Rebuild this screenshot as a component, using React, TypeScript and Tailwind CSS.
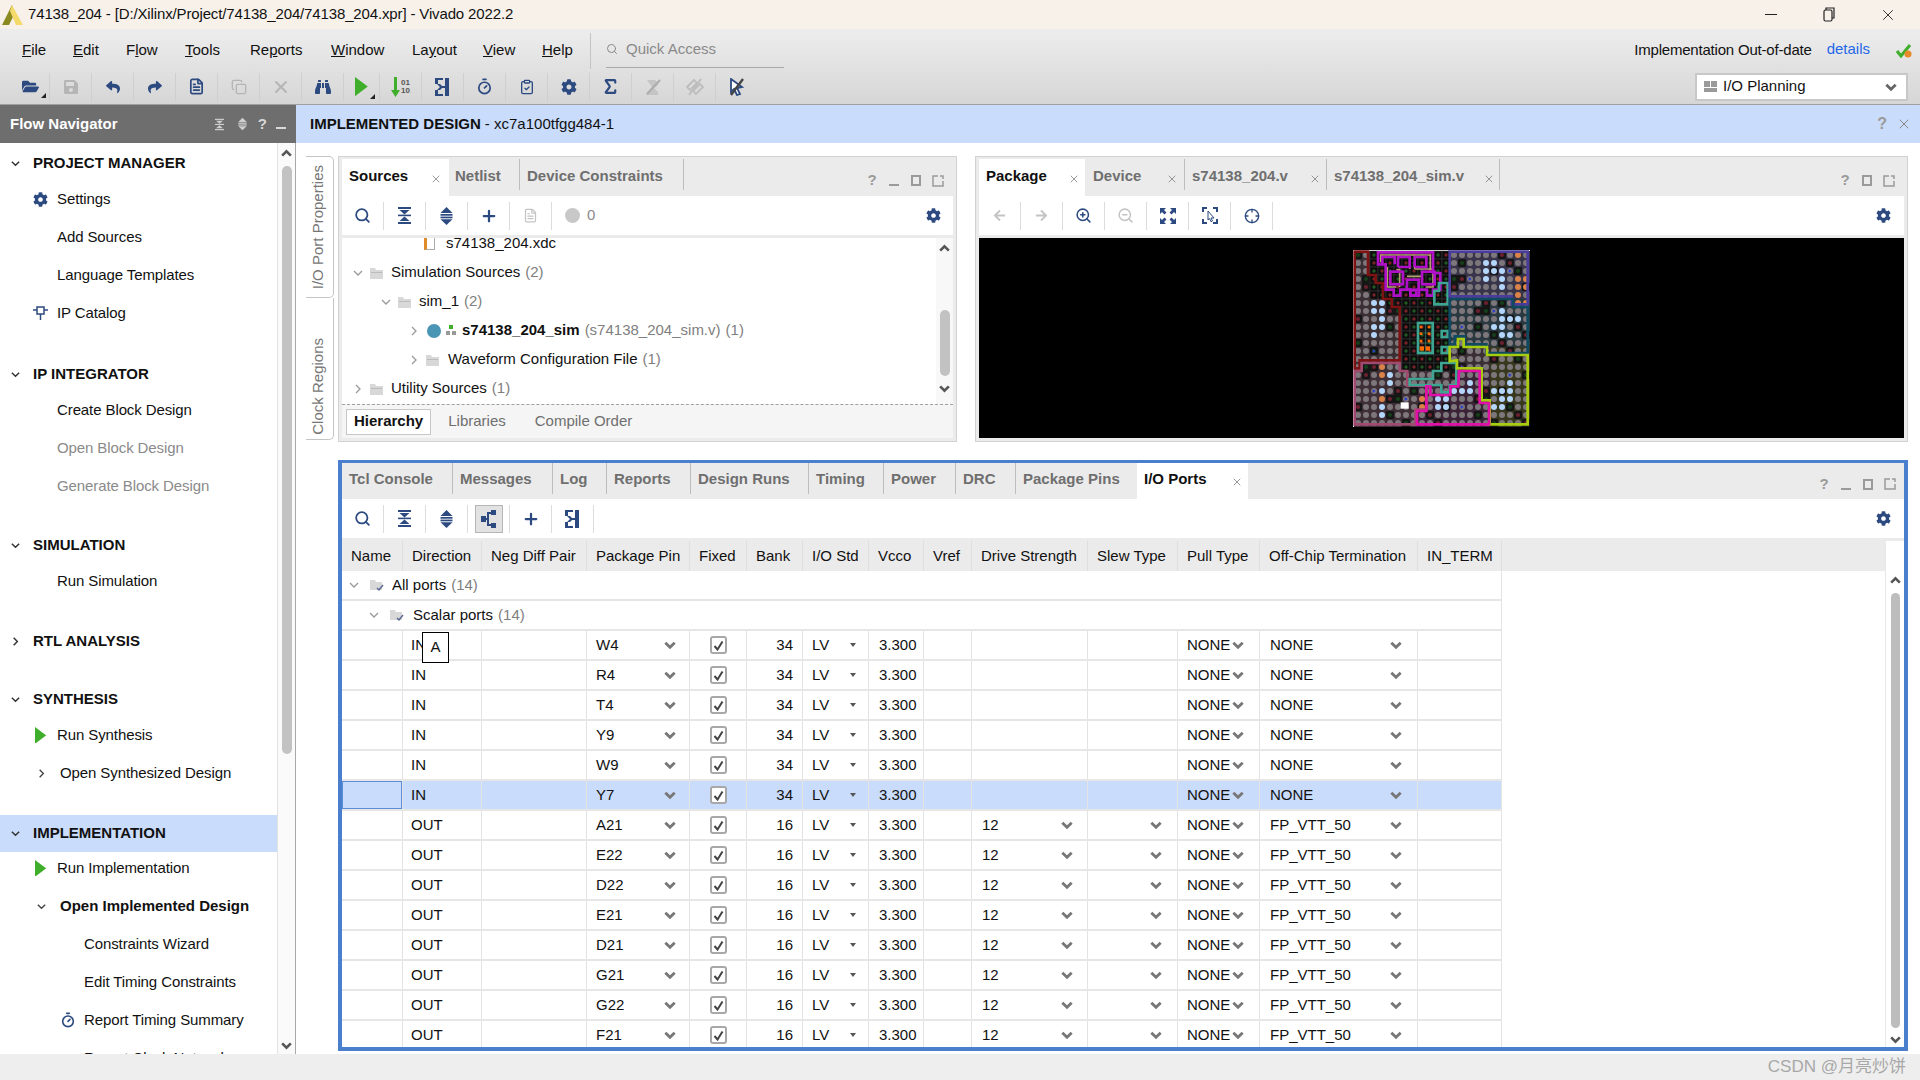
import { ReactNode } from "react";
import { Copy, Crosshair, FileText, Plus, Search, Sigma, Timer, ZoomIn, ZoomOut, ClipboardCheck, X } from "lucide-react";
import { FaArrowLeft, FaArrowRight, FaBinoculars, FaCog, FaFolderOpen, FaReply, FaSave, FaShare } from "react-icons/fa";

const NAVY = "#2c4a80";

const Chevron = ({ dir = "down", color = "#777", size = 14, w = 2.4 }: { dir?: "down" | "up" | "right"; color?: string; size?: number; w?: number }) => {
    const d = dir === "down" ? "M2 4l4 4 4-4" : dir === "up" ? "M2 8l4-4 4 4" : "M4 2l4 4-4 4";
    return (
        <svg width={size} height={size} viewBox="0 0 12 12" fill="none" stroke={color} strokeWidth={w}>
            <path d={d} />
        </svg>
    );
};

const Play = ({ size = 16 }: { size?: number }) => (
    <svg width={size * 0.8} height={size * 1.2} viewBox="0 0 12 18">
        <path d="M0 0l12 9-12 9z" fill="#3fae2a" />
    </svg>
);

const CollapseIcon = ({ color = NAVY }: { color?: string }) => (
    <svg width="15" height="17" viewBox="0 0 15 17" fill={color}>
        <rect x="1" y="0" width="13" height="2" />
        <path d="M2.5 3h10l-5 4.5z" />
        <rect x="1" y="7.6" width="13" height="1.6" />
        <path d="M7.5 9.6l5 4.4h-10z" />
        <rect x="1" y="15" width="13" height="2" />
    </svg>
);

const ExpandIcon = ({ color = NAVY }: { color?: string }) => (
    <svg width="13" height="18" viewBox="0 0 13 18" fill={color}>
        <path d="M6.5 0l6 6h-12z" />
        <rect x="0.5" y="7" width="12" height="1.7" />
        <rect x="0.5" y="9.6" width="12" height="1.7" />
        <path d="M0.5 12.2h12l-6 5.8z" />
    </svg>
);

const RouteIcon = ({ color = NAVY }: { color?: string }) => (
    <svg width="16" height="18" viewBox="0 0 16 18" fill={color}>
        <path d="M0 0h8v2H3v4h2L8 9l-3 3H3v4h5v2H0v-6h2l3-3-3-3H0z" />
        <rect x="10" y="0" width="4" height="18" />
        <path d="M6 8h4v2H6z" />
    </svg>
);

const HierIcon = () => (
    <svg width="16" height="18" viewBox="0 0 16 18" fill={NAVY}>
        <rect x="0" y="6" width="5" height="6" />
        <rect x="10" y="0" width="5" height="5" />
        <rect x="10" y="13" width="5" height="5" />
        <rect x="6" y="2" width="2" height="14" />
        <rect x="4" y="8" width="4" height="2" />
        <rect x="7" y="2" width="4" height="2" />
        <rect x="7" y="14" width="4" height="2" />
    </svg>
);

const FitIcon = () => (
    <svg width="16" height="16" viewBox="0 0 16 16" fill={NAVY}>
        <path d="M0 0h6L4 2l2.5 2.5-2 2L2 4 0 6zM16 0v6l-2-2-2.500 2.500-2-2L12 2l-2-2zM0 16v-6l2 2 2.500-2.500 2 2L4 14l2 2zM16 16h-6l2-2-2.500-2.500 2-2L14 12l2-2z" />
    </svg>
);

const SelectIcon = () => (
    <svg width="16" height="17" viewBox="0 0 16 17" fill="none" stroke={NAVY} strokeWidth="1.500">
        <path d="M1 5V1h4M11 1h4v4M1 12v4h4M11 16h4v-4" strokeWidth="2" />
        <path d="M6 4l6 7H9l1.500 3-1.500.7L7.500 11.500 6 13z" strokeWidth="1" />
    </svg>
);

const BitIcon = () => (
    <span className="flex items-center gap-[1px]">
        <svg width="9" height="20" viewBox="0 0 9 20"><path d="M3 0h3v13h3l-4.500 7L0 13h3z" fill="#3fae2a" /></svg>
        <span className="flex flex-col text-[8px] leading-[8px] font-bold text-[#555]"><span>01</span><span>10</span></span>
    </span>
);

const SigmaOff = () => (
    <svg width="18" height="18" viewBox="0 0 18 18">
        <path d="M2 17L8 9 3 2h8l3 3v2L10 10l4 4v3z" fill="#c4c4c4" />
        <path d="M3 16L16 2" stroke="#adadad" strokeWidth="2" />
    </svg>
);

const DiamondOff = () => (
    <svg width="18" height="18" viewBox="0 0 18 18" fill="none" stroke="#bdbdbd" strokeWidth="1.800">
        <path d="M1 9l7-7 3 3-7 7zM7 13l7-7 3 3-7 7z" />
        <path d="M3 17L15 1" strokeWidth="2" />
    </svg>
);

const CursorOff = () => (
    <svg width="18" height="18" viewBox="0 0 18 18">
        <path d="M3 1l11 8-5 1 3 6-3 1-3-6-3 3z" fill="#fff" stroke={NAVY} strokeWidth="1.800" />
        <path d="M3 17L15 1" stroke="#444" strokeWidth="2.400" />
    </svg>
);

const DropMark = () => <span className="absolute -right-[7px] -bottom-[3px] w-0 h-0 border-l-[5px] border-t-[5px] border-l-transparent border-t-transparent border-b-0 border-r-[5px] border-r-[#222]" />;

const WinRestore = () => (
    <svg width="12" height="15" viewBox="0 0 12 15" fill="none" stroke="#222" strokeWidth="1.200">
        <rect x="1" y="3" width="8" height="11" rx="1.500" />
        <path d="M3 3V1h8v10H9" />
    </svg>
);

const PanelControls = ({ min = true }: { min?: boolean }) => (
    <div className="flex items-center text-[#9a9a9a]">
        <span className="w-[22px] text-center text-[15px] font-bold">?</span>
        {min && <span className="w-[22px] flex justify-center pt-[9px]"><span className="w-[10px] h-[2px] bg-[#9a9a9a]" /></span>}
        <span className="w-[22px] flex justify-center"><span className="w-[10px] h-[11px] border-2 border-[#9a9a9a]" /></span>
        <span className="w-[22px] flex justify-center">
            <svg width="12" height="12" viewBox="0 0 12 12" fill="none" stroke="#9a9a9a" strokeWidth="1.500">
                <path d="M6 1H1v10h10V6M8 1h3v3" />
            </svg>
        </span>
    </div>
);

const Tab = ({ label, width, active, close, closeGap }: { label: string; width: string; active?: boolean; close?: boolean; closeGap?: string }) => (
    <div className={`${width} h-full flex items-center pl-[7px] shrink-0 ${active ? "bg-white text-[#111]" : "text-[#6f6f6f]"}`}>
        <span className="text-[15px] font-bold whitespace-nowrap mb-[3px]">{label}</span>
        {close && (
            <span className={`ml-auto ${closeGap ?? "mr-[6px]"} mt-[2px]`}>
                <X size={12} color="#777" strokeWidth={1.500} />
            </span>
        )}
    </div>
);

const TabSep = () => <span className="w-[1px] h-[31px] bg-[#bdbdbd] shrink-0 -mt-[6px]" />;

const Slot = ({ children, on }: { children?: ReactNode; on?: boolean }) => (
    <div className="w-[42px] h-[28px] flex items-center justify-center border-r border-[#dcdcdc] shrink-0">
        {on ? (
            <span className="w-[28px] h-[28px] flex items-center justify-center bg-[#e2e2e2] border border-[#b5b5b5]">{children}</span>
        ) : (
            children
        )}
    </div>
);

const Gear = ({ size = 15 }: { size?: number }) => <FaCog size={size} color={NAVY} />;

const NavHeader = ({ label, open, active, mt }: { label: string; open?: boolean; active?: boolean; mt?: string }) => (
    <div className={`h-[37px] flex items-center pl-[10px] ${mt ?? ""} ${active ? "bg-[#c9dcfb]" : ""}`}>
        <span className="w-[23px] flex"><Chevron dir={open ? "down" : "right"} color="#333" size={11} w={1.600} /></span>
        <span className="text-[15px] font-bold text-[#111] whitespace-nowrap">{label}</span>
    </div>
);

const NavItem = ({ label, icon, pad = "pl-[33px]", muted, bold }: { label: string; icon?: ReactNode; pad?: string; muted?: boolean; bold?: boolean }) => (
    <div className={`h-[38px] flex items-center ${pad}`}>
        <span className="w-[24px] flex justify-start">{icon}</span>
        <span className={`text-[15px] tracking-[-0.1px] whitespace-nowrap ${muted ? "text-[#8a8a8a]" : "text-[#111]"} ${bold ? "font-bold" : ""}`}>{label}</span>
    </div>
);

const Sidebar = () => (
    <div className="w-[296px] shrink-0 flex border-r border-[#a8a8a8] overflow-hidden">
        <div className="w-[277px] shrink-0 overflow-hidden pt-[2px]">
            <NavHeader label="PROJECT MANAGER" open />
            <div className="-mt-[2px]">
                <NavItem label="Settings" icon={<Gear size={15} />} />
                <NavItem label="Add Sources" />
                <NavItem label="Language Templates" />
                <NavItem label="IP Catalog" icon={
                    <svg width="15" height="16" viewBox="0 0 15 16" fill="none" stroke={NAVY} strokeWidth="1.500"><rect x="4" y="2" width="7" height="7" /><path d="M7.500 9v6M0 5h4M11 5h4" /></svg>
                } />
            </div>
            <NavHeader label="IP INTEGRATOR" open mt="mt-[24px]" />
            <div className="-mt-[2px]">
                <NavItem label="Create Block Design" />
                <NavItem label="Open Block Design" muted />
                <NavItem label="Generate Block Design" muted />
            </div>
            <NavHeader label="SIMULATION" open mt="mt-[22px]" />
            <div className="-mt-[2px]">
                <NavItem label="Run Simulation" />
            </div>
            <NavHeader label="RTL ANALYSIS" mt="mt-[23px]" />
            <NavHeader label="SYNTHESIS" open mt="mt-[21px]" />
            <div className="-mt-[2px]">
                <NavItem label="Run Synthesis" icon={<span className="ml-[2px]"><Play size={14} /></span>} />
                <div className="h-[38px] flex items-center pl-[36px]">
                    <span className="w-[24px]"><Chevron dir="right" color="#444" size={11} w={1.500} /></span>
                    <span className="text-[15px] tracking-[-0.1px] text-[#111] whitespace-nowrap">Open Synthesized Design</span>
                </div>
            </div>
            <NavHeader label="IMPLEMENTATION" open active mt="mt-[23px]" />
            <div className="-mt-[3px]">
                <NavItem label="Run Implementation" icon={<span className="ml-[2px]"><Play size={14} /></span>} />
                <div className="h-[38px] flex items-center pl-[36px]">
                    <span className="w-[24px]"><Chevron color="#444" size={11} w={1.500} /></span>
                    <span className="text-[15px] font-bold text-[#111] whitespace-nowrap">Open Implemented Design</span>
                </div>
                <NavItem label="Constraints Wizard" pad="pl-[60px]" />
                <NavItem label="Edit Timing Constraints" pad="pl-[60px]" />
                <NavItem label="Report Timing Summary" pad="pl-[60px]" icon={<Timer size={16} color={NAVY} strokeWidth={2.400} />} />
                <NavItem label="Report Clock Networks" pad="pl-[60px]" />
            </div>
        </div>
        <div className="w-[18px] shrink-0 border-l border-[#e2e2e2] bg-[#fafafa] flex flex-col items-center pt-[4px]">
            <Chevron dir="up" size={13} color="#555" />
            <span className="w-[10px] h-[588px] mt-[6px] rounded-[5px] bg-[#c2c2c2]" />
            <span className="mt-[285px]"><Chevron size={13} color="#555" /></span>
        </div>
    </div>
);

const FolderIcon = () => (
    <svg width="13" height="12" viewBox="0 0 13 12">
        <path d="M0 1h5l1 2h7v9H0z" fill="#d8d8d8" />
        <path d="M1 5h11v1H1z" fill="#bcbcbc" />
    </svg>
);

const TreeRow = ({ pad, arrow, children }: { pad: string; arrow?: "down" | "right"; children: ReactNode }) => (
    <div className={`h-[29px] flex items-center shrink-0 whitespace-nowrap text-[15px] text-[#111] ${pad}`}>
        <span className="w-[18px] flex">{arrow && <Chevron dir={arrow} color="#999" size={12} w={1.300} />}</span>
        {children}
    </div>
);

const Count = ({ children }: { children: ReactNode }) => <span className="text-[#808080] ml-[5px]">{children}</span>;

const SourcesPanel = () => (
    <div className="w-[619px] h-full shrink-0 flex flex-col bg-[#ebebeb] border border-[#d2d2d2] px-[3px] pb-[3px]">
        <div className="h-[38px] shrink-0 flex items-end mt-[1px]">
            <div className="h-[37px] flex items-center w-full">
                <Tab label="Sources" width="w-[107px]" active close closeGap="mr-[7px]" />
                <Tab label="Netlist" width="w-[71px] ml-[-1px]" />
                <TabSep />
                <Tab label="Device Constraints" width="w-[163px]" />
                <TabSep />
                <div className="ml-auto mr-[4px] mt-[6px]"><PanelControls /></div>
            </div>
        </div>
        <div className="h-[39px] shrink-0 bg-white flex items-center pr-[5px]">
            <Slot><Search size={17} color={NAVY} strokeWidth={2.500} /></Slot>
            <Slot><CollapseIcon /></Slot>
            <Slot><ExpandIcon /></Slot>
            <Slot><Plus size={18} color={NAVY} strokeWidth={3} /></Slot>
            <Slot><FileText size={15} color="#c4c4c4" /></Slot>
            <div className="flex items-center ml-[13px] gap-[7px]">
                <span className="w-[15px] h-[15px] rounded-full bg-[#c8c8c8]" />
                <span className="text-[15px] text-[#8a8a8a]">0</span>
            </div>
            <span className="ml-auto mr-[7px]"><Gear size={15} /></span>
        </div>
        <div className="h-[3px] shrink-0" />
        <div className="h-[166px] shrink-0 bg-white flex overflow-hidden">
            <div className="flex-1 min-w-0 flex flex-col -mt-[9px]">
                <TreeRow pad="pl-[66px]">
                    <span className="w-[11px] h-[13px] bg-white border border-[#aaa] border-l-[3px] border-l-[#e08a2c] mr-[11px] ml-[-2px]" />
                    <span>s74138_204.xdc</span>
                </TreeRow>
                <TreeRow pad="pl-[10px]" arrow="down"><FolderIcon /><span className="ml-[8px]">Simulation Sources</span><Count>(2)</Count></TreeRow>
                <TreeRow pad="pl-[38px]" arrow="down"><FolderIcon /><span className="ml-[8px]">sim_1</span><Count>(2)</Count></TreeRow>
                <TreeRow pad="pl-[66px]" arrow="right">
                    <span className="w-[14px] h-[14px] rounded-full bg-[#4a95b4] ml-[1px]" />
                    <span className="w-[11px] h-[11px] flex flex-col items-center mx-[4px]">
                        <span className="w-[4px] h-[4px] bg-[#3fae2a]" />
                        <span className="flex gap-[2px] mt-[2px]"><span className="w-[4px] h-[4px] bg-[#999]" /><span className="w-[4px] h-[4px] bg-[#999]" /></span>
                    </span>
                    <span className="font-bold ml-[2px]">s74138_204_sim</span>
                    <Count>(s74138_204_sim.v)</Count>
                    <Count>(1)</Count>
                </TreeRow>
                <TreeRow pad="pl-[66px]" arrow="right"><FolderIcon /><span className="ml-[9px]">Waveform Configuration File</span><Count>(1)</Count></TreeRow>
                <TreeRow pad="pl-[10px]" arrow="right"><FolderIcon /><span className="ml-[8px]">Utility Sources</span><Count>(1)</Count></TreeRow>
            </div>
            <div className="w-[17px] shrink-0 bg-[#f8f8f8] flex flex-col items-center pt-[4px]">
                <Chevron dir="up" size={13} color="#555" />
                <span className="w-[10px] h-[66px] mt-[55px] rounded-[5px] bg-[#c2c2c2]" />
                <span className="mt-[6px]"><Chevron size={13} color="#555" /></span>
            </div>
        </div>
        <div className="flex-1 bg-[#f5f5f5] border-t border-dashed border-[#a0a0a0] flex items-center pl-[4px] text-[15px]">
            <span className="h-[26px] px-[7px] flex items-center bg-white border border-[#c8c8c8] font-bold text-[#111]">Hierarchy</span>
            <span className="ml-[17px] text-[#6f6f6f]">Libraries</span>
            <span className="ml-[29px] text-[#6f6f6f]">Compile Order</span>
        </div>
    </div>
);

const BLUE_CELLS = [[218,216],[243,216],[218,240],[243,240],[243,264],[218,288],[243,288],[218,312],[555,96],[579,96],[555,120],[579,120],[603,120],[555,144],[603,144],[603,168],[603,240],[603,264],[627,264],[651,264],[579,288],[603,288],[603,312],[627,312],[267,432],[267,456],[243,480],[243,528],[243,552],[507,456],[459,480],[483,480],[507,480],[411,504],[435,504],[411,528],[435,528],[579,480],[603,480],[627,456],[627,480],[603,504],[627,504],[579,528],[603,528]];
const ORANGE_CELLS = [[651,72],[651,144],[675,144],[651,168],[675,168],[651,192],[651,216],[675,216],[243,408],[243,432],[243,504],[363,504],[363,528]];
const ARROW_CELLS = [[507,144],[627,120],[579,240],[483,288],[219,168],[219,360],[219,480],[315,504],[483,408],[483,528],[627,432]];

const key = (x: number, y: number) => `${Math.floor((x - 163) / 24)}_${Math.floor((y - 64) / 24)}`;
const blueSet = new Set(BLUE_CELLS.map(([x, y]) => key(x, y)));
const orangeSet = new Set(ORANGE_CELLS.map(([x, y]) => key(x, y)));
const arrowSet = new Set(ARROW_CELLS.map(([x, y]) => key(x, y)));

const inCenter = (x: number, y: number) =>
    (x >= 300 && x < 450 && y < 418) || (x >= 205 && x < 300 && y < 205) || (x >= 250 && x < 300 && y < 230);

const tintAt = (x: number, y: number) => {
    if (x >= 450 && y < 205) return "#38344a";
    if (x >= 450 && y < 350) return "#2a383f";
    if (x >= 570 && y >= 350) return "#38381f";
    if (x >= 350 && y >= 470) return "#3c2438";
    if (x >= 450 && y >= 420) return "#3c2438";
    if (y >= 410) return "#3e2e36";
    return "#3a2f32";
};

const ChipCells = () => {
    const cells: ReactNode[] = [];
    for (let r = 0; r < 22; r++) {
        for (let c = 0; c < 22; c++) {
            const x = 163 + c * 24;
            const y = 64 + r * 24;
            const k = `${c}_${r}`;
            const center = inCenter(x, y);
            const hash = (c * 7 + r * 13 + c * r * 3) % 11;
            if (center) {
                cells.push(
                    <g key={k}>
                        <rect x={x} y={y} width="24" height="24" fill="#0c0c0c" stroke="#3a3a3a" strokeWidth="1.500" />
                        <circle cx={x + 12} cy={y + 12} r="5" fill={(r + c) % 2 === 0 ? "#1f5a22" : "#7a2226"} />
                    </g>
                );
                continue;
            }
            let fill = "#7d777c";
            let r2 = 9;
            if (blueSet.has(k)) fill = "#b4d6fb";
            else if (orangeSet.has(k)) fill = "#d9824a";
            else if (hash === 0) { fill = "#14401a"; r2 = 6; }
            else if (hash === 5) { fill = "#6e2030"; r2 = 6; }
            cells.push(
                <g key={k}>
                    <rect x={x} y={y} width="24" height="24" fill={hash === 0 || hash === 5 ? "#161616" : tintAt(x, y)} />
                    <circle cx={x + 12} cy={y + 12} r={r2} fill={fill} />
                    {arrowSet.has(k) && <path d={`M${x + 8} ${y + 6}l9 6-9 6z`} fill="#2a3fd0" />}
                </g>
            );
        }
    }
    return <>{cells}</>;
};

const ChipMap = () => (
    <svg width="177" height="177" viewBox="160 61 531 531" className="shrink-0">
        <rect x="160" y="61" width="531" height="531" fill="#fff" />
        <rect x="163" y="64" width="525" height="525" fill="#111" />
        <ChipCells />
        <g fill="none" strokeWidth="8">
            <path stroke="#7c1212" d="M165 66H205V136H228V160H250V208H276V232H300V392H180V416H165Z" />
            <path stroke="#a04a70" d="M165 424H186V400H300V424H323V468H380V540H347V584H165Z" />
            <path stroke="#b5a070" strokeWidth="5" d="M243 98V76H392V122M263 112V172H290M300 172V120H290M345 118H400V172H378M322 140H368M330 118V96M345 118V96" />
            <path stroke="#b010c8" d="M235 104V68H400V130H422V180H400V198H382V180H358V198H332V180H302V198H282V180H258V104Z" />
            <path stroke="#b010c8" d="M248 104V82H285V104M295 112V82H330V112H295M345 112V82H380V112H345" />
            <rect stroke="#b010c8" x="272" y="126" width="38" height="38" />
            <rect stroke="#b010c8" x="367" y="126" width="38" height="38" />
            <rect stroke="#b010c8" x="322" y="150" width="35" height="30" />
            <rect stroke="#b010c8" x="332" y="182" width="18" height="16" />
            <path stroke="#3fa593" d="M418 160H444V224H404V184H418Z" />
            <rect stroke="#3fa593" x="355" y="280" width="44" height="90" />
            <path stroke="#3fa593" strokeWidth="1.500" d="M377 280V370M355 310H399M355 340H399" />
            <rect stroke="#3fa593" x="426" y="304" width="18" height="18" />
            <rect stroke="#3fa593" x="426" y="352" width="18" height="18" />
            <path stroke="#3fa593" d="M425 400H470V466H450V488H425V466H330V448H400V424H425Z" />
            <path stroke="#4a3c9c" d="M450 66H684V224H636V200H450Z" />
            <path stroke="#104a60" d="M450 208H640V232H684V370H560V344H495V320H465V344H450Z" />
            <path stroke="#a8cc10" d="M450 395V352H475V328H492V352H562V376H684V584H570V512H546V416H472V392Z" />
            <path stroke="#e010a8" d="M478 424H540V520H568V584H352V544H380V470H392V496H452V470H476Z" />
        </g>
        <g fill="#ff6a00">
            <rect x="360" y="350" width="13" height="13" />
            <rect x="378" y="350" width="13" height="13" />
            <rect x="360" y="288" width="8" height="8" />
            <rect x="384" y="288" width="8" height="8" />
            <rect x="360" y="308" width="8" height="8" />
            <rect x="384" y="308" width="8" height="8" />
            <rect x="360" y="330" width="8" height="8" />
            <rect x="384" y="330" width="8" height="8" />
        </g>
        <rect x="303" y="518" width="24" height="19" fill="#fff" />
    </svg>
);

const PackagePanel = () => (
    <div className="w-[933px] h-full shrink-0 flex flex-col bg-[#ebebeb] border border-[#d2d2d2] px-[3px] pb-[3px] ml-[18px]">
        <div className="h-[38px] shrink-0 flex items-end mt-[1px]">
            <div className="h-[37px] flex items-center w-full">
                <Tab label="Package" width="w-[106px] pl-[5px]" active close closeGap="mr-[5px]" />
                <Tab label="Device" width="w-[98px] ml-[1px]" close closeGap="mr-[6px]" />
                <TabSep />
                <Tab label="s74138_204.v" width="w-[141px]" close closeGap="mr-[5px]" />
                <TabSep />
                <Tab label="s74138_204_sim.v" width="w-[172px]" close closeGap="mr-[4px]" />
                <TabSep />
                <div className="ml-auto mr-[4px] mt-[6px]"><PanelControls min={false} /></div>
            </div>
        </div>
        <div className="h-[39px] shrink-0 bg-white flex items-center">
            <Slot><FaArrowLeft size={13} color="#c4c4c4" /></Slot>
            <Slot><FaArrowRight size={13} color="#c4c4c4" /></Slot>
            <Slot><ZoomIn size={17} color={NAVY} strokeWidth={2.200} /></Slot>
            <Slot><ZoomOut size={17} color="#c4c4c4" strokeWidth={2.200} /></Slot>
            <Slot><FitIcon /></Slot>
            <Slot><SelectIcon /></Slot>
            <Slot><Crosshair size={16} color={NAVY} /></Slot>
            <span className="ml-auto mr-[13px]"><Gear size={15} /></span>
        </div>
        <div className="h-[3px] shrink-0" />
        <div className="flex-1 bg-black flex items-center justify-center">
            <ChipMap />
        </div>
    </div>
);

const COLS = "grid grid-cols-[61px_79px_105px_103px_57px_56px_66px_55px_48px_116px_90px_82px_158px_84px]";
const HEADERS = ["Name", "Direction", "Neg Diff Pair", "Package Pin", "Fixed", "Bank", "I/O Std", "Vcco", "Vref", "Drive Strength", "Slew Type", "Pull Type", "Off-Chip Termination", "IN_TERM"];

const ROWS = [
    { pin: "W4", dir: "IN" },
    { pin: "R4", dir: "IN" },
    { pin: "T4", dir: "IN" },
    { pin: "Y9", dir: "IN" },
    { pin: "W9", dir: "IN" },
    { pin: "Y7", dir: "IN", sel: true },
    { pin: "A21", dir: "OUT" },
    { pin: "E22", dir: "OUT" },
    { pin: "D22", dir: "OUT" },
    { pin: "E21", dir: "OUT" },
    { pin: "D21", dir: "OUT" },
    { pin: "G21", dir: "OUT" },
    { pin: "G22", dir: "OUT" },
    { pin: "F21", dir: "OUT" },
];

const Cell = ({ children, className = "" }: { children?: ReactNode; className?: string }) => (
    <div className={`h-full flex items-center border-r border-[#e3e3e3] min-w-0 relative ${className}`}>{children}</div>
);

const Check = () => (
    <span className="w-[17px] h-[18px] rounded-[3px] border-2 border-[#a8a8a8] bg-white flex items-center justify-center">
        <svg width="11" height="11" viewBox="0 0 11 11" fill="none" stroke="#444" strokeWidth="2"><path d="M1.500 6l3 3.500 5-8" /></svg>
    </span>
);

const PortRow = ({ pin, dir, sel, first }: { pin: string; dir: string; sel?: boolean; first?: boolean }) => {
    const out = dir === "OUT";
    return (
        <div className={`${COLS} w-[1160px] h-[30px] border-b-2 border-[#e6e6e6] text-[15px] text-[#111] shrink-0 ${sel ? "bg-[#c9dcfb]" : ""}`}>
            <Cell className={sel ? "shadow-[inset_0_0_0_1px_#5b8fd8]" : ""} />
            <Cell className="pl-[8px]">
                {dir}
                {first && (
                    <span className="absolute left-[19px] top-[1px] w-[27px] h-[31px] bg-white border border-black flex items-center justify-center z-10">A</span>
                )}
            </Cell>
            <Cell />
            <Cell className="pl-[9px] justify-between pr-[12px]">{pin}<Chevron /></Cell>
            <Cell className="justify-center"><Check /></Cell>
            <Cell className="justify-end pr-[9px]">{out ? "16" : "34"}</Cell>
            <Cell className="pl-[9px]">
                LV
                <span className="ml-[21px] w-0 h-0 border-x-[3px] border-t-[4px] border-x-transparent border-t-[#555]" />
            </Cell>
            <Cell className="pl-[10px]">3.300</Cell>
            <Cell />
            <Cell className="pl-[10px] justify-between pr-[13px]">{out ? "12" : ""}{out && <Chevron />}</Cell>
            <Cell className="justify-end pr-[14px]">{out && <Chevron />}</Cell>
            <Cell className="pl-[9px] gap-[1px]">NONE<Chevron /></Cell>
            <Cell className="pl-[10px] justify-between pr-[14px]">{out ? "FP_VTT_50" : "NONE"}<Chevron /></Cell>
            <Cell />
        </div>
    );
};

const DocFolder = () => (
    <svg width="14" height="13" viewBox="0 0 14 13">
        <path d="M0 1h5l1 2h6v8H0z" fill="#d8d8d8" />
        <path d="M7 9l2 2 4-5" fill="none" stroke="#5a6a90" strokeWidth="1.500" />
    </svg>
);

const IoPortsPanel = () => (
    <div className="h-[591px] w-[1570px] ml-[42px] mt-[18px] shrink-0 border-x-[4px] border-b-[4px] border-t-[3px] border-[#4a7fce] flex flex-col overflow-hidden bg-white">
        <div className="h-[36px] shrink-0 bg-[#ebebeb] flex items-center">
            <Tab label="Tcl Console" width="w-[110px]" />
            <TabSep />
            <Tab label="Messages" width="w-[99px]" />
            <TabSep />
            <Tab label="Log" width="w-[53px]" />
            <TabSep />
            <Tab label="Reports" width="w-[83px]" />
            <TabSep />
            <Tab label="Design Runs" width="w-[117px]" />
            <TabSep />
            <Tab label="Timing" width="w-[74px]" />
            <TabSep />
            <Tab label="Power" width="w-[71px]" />
            <TabSep />
            <Tab label="DRC" width="w-[59px]" />
            <TabSep />
            <Tab label="Package Pins" width="w-[121px]" />
            <Tab label="I/O Ports" width="w-[111px]" active close closeGap="mr-[5px]" />
            <div className="ml-auto mr-[3px] mt-[6px]"><PanelControls /></div>
        </div>
        <div className="h-[39px] shrink-0 bg-white flex items-center">
            <Slot><Search size={17} color={NAVY} strokeWidth={2.500} /></Slot>
            <Slot><CollapseIcon /></Slot>
            <Slot><ExpandIcon /></Slot>
            <Slot on><HierIcon /></Slot>
            <Slot><Plus size={18} color={NAVY} strokeWidth={3} /></Slot>
            <Slot><RouteIcon /></Slot>
            <span className="ml-auto mr-[13px]"><Gear size={15} /></span>
        </div>
        <div className="h-[3px] shrink-0 bg-[#ebebeb]" />
        <div className="flex-1 min-h-0 flex">
            <div className="flex-1 min-w-0 flex flex-col overflow-hidden">
                <div className="h-[30px] shrink-0 bg-[#ebebeb]">
                    <div className={`${COLS} w-[1160px] h-full text-[15px] text-[#111]`}>
                        {HEADERS.map(h => (
                            <div key={h} className="h-full flex items-center pl-[9px] border-r border-[#dedede] whitespace-nowrap overflow-hidden">{h}</div>
                        ))}
                    </div>
                </div>
                <div className="flex-1 min-h-0 flex flex-col overflow-hidden">
                    <div className="w-[1160px] border-r border-[#e3e3e3]">
                        <div className="h-[30px] border-b-2 border-[#e6e6e6] flex items-center pl-[6px] text-[15px] text-[#111]">
                            <span className="w-[22px]"><Chevron color="#999" size={12} w={1.300} /></span>
                            <DocFolder />
                            <span className="ml-[8px]">All ports</span>
                            <Count>(14)</Count>
                        </div>
                        <div className="h-[30px] border-b-2 border-[#e6e6e6] flex items-center pl-[26px] text-[15px] text-[#111]">
                            <span className="w-[22px]"><Chevron color="#999" size={12} w={1.300} /></span>
                            <DocFolder />
                            <span className="ml-[9px]">Scalar ports</span>
                            <Count>(14)</Count>
                        </div>
                    </div>
                    {ROWS.map((r, i) => (
                        <PortRow key={r.pin} pin={r.pin} dir={r.dir} sel={r.sel} first={i === 0} />
                    ))}
                </div>
            </div>
            <div className="w-[19px] shrink-0 border-l border-[#e8e8e8] flex flex-col items-center pt-[33px] bg-white">
                <Chevron dir="up" size={13} color="#555" />
                <span className="w-[9px] h-[435px] mt-[6px] rounded-[5px] bg-[#bdbdbd]" />
                <span className="mt-[5px]"><Chevron size={13} color="#555" /></span>
            </div>
        </div>
    </div>
);

const MENU: { pre: string; u: string; post: string; w: string }[] = [
    { pre: "", u: "F", post: "ile", w: "w-[51px]" },
    { pre: "", u: "E", post: "dit", w: "w-[53px]" },
    { pre: "F", u: "l", post: "ow", w: "w-[59px]" },
    { pre: "", u: "T", post: "ools", w: "w-[65px]" },
    { pre: "Re", u: "p", post: "orts", w: "w-[81px]" },
    { pre: "", u: "W", post: "indow", w: "w-[81px]" },
    { pre: "La", u: "y", post: "out", w: "w-[71px]" },
    { pre: "", u: "V", post: "iew", w: "w-[59px]" },
    { pre: "", u: "H", post: "elp", w: "w-[48px]" },
];

const TOOLBAR: { icon: ReactNode; width?: string }[] = [
    { icon: <span className="relative ml-[4px] flex"><FaFolderOpen size={17} color={NAVY} /><DropMark /></span> },
    { icon: <FaSave size={16} color="#b5b5b5" /> },
    { icon: <FaReply size={14} color={NAVY} /> },
    { icon: <FaShare size={14} color={NAVY} /> },
    { icon: <FileText size={17} color={NAVY} strokeWidth={2.400} /> },
    { icon: <Copy size={16} color="#b5b5b5" /> },
    { icon: <X size={20} color="#b5b5b5" strokeWidth={2.400} /> },
    { icon: <FaBinoculars size={16} color={NAVY} /> },
    { icon: <span className="relative flex"><Play size={16} /><DropMark /></span>, width: "w-[36px]" },
    { icon: <BitIcon /> },
    { icon: <RouteIcon /> },
    { icon: <Timer size={17} color={NAVY} strokeWidth={2.400} /> },
    { icon: <ClipboardCheck size={16} color={NAVY} /> },
    { icon: <FaCog size={16} color={NAVY} /> },
    { icon: <Sigma size={19} color={NAVY} strokeWidth={2.800} /> },
    { icon: <SigmaOff /> },
    { icon: <DiamondOff /> },
    { icon: <CursorOff /> },
];

const TopBars = () => (
    <>
        <div className="h-[29px] shrink-0 bg-[#f8f1ea] flex items-center text-[15px] text-[#111]">
            <svg width="22" height="20" viewBox="0 0 22 20" className="ml-[2px]">
                <path d="M10 0L0 20h7l5-10z" fill="#8a8a20" />
                <path d="M10 0l11 20h-7L8 6z" fill="#f4d96b" />
            </svg>
            <span className="ml-[4px] whitespace-nowrap tracking-[-0.14px]">74138_204 - [D:/Xilinx/Project/74138_204/74138_204.xpr] - Vivado 2022.2</span>
            <div className="ml-auto flex items-center">
                <span className="w-[12px] h-[1px] bg-[#222] mr-[46px]" />
                <span className="mr-[44px]"><WinRestore /></span>
                <span className="mr-[23px]"><X size={18} color="#222" strokeWidth={1.200} /></span>
            </div>
        </div>
        <div className="h-[76px] shrink-0 border-b border-[#a0a0a0] bg-[linear-gradient(#ededed,#d6d6d6)] flex flex-col">
            <div className="h-[43px] flex items-center text-[15px] text-[#111] pl-[22px]">
                {MENU.map(m => (
                    <span key={m.u + m.post} className={`${m.w} whitespace-nowrap`}>
                        {m.pre}<span className="underline">{m.u}</span>{m.post}
                    </span>
                ))}
                <span className="w-[1px] h-[36px] bg-[#c4c4c4]" />
                <div className="ml-[15px] w-[178px] h-[36px] border-b border-[#aaa] flex items-center gap-[8px] text-[#8a8a8a] -mt-[2px]">
                    <Search size={12} color="#888" />
                    <span>Quick Access</span>
                </div>
                <span className="ml-auto tracking-[-0.2px]">Implementation Out-of-date</span>
                <span className="ml-[15px] text-[#2468e8] -mt-[2px]">details</span>
                <svg width="16" height="14" viewBox="0 0 16 14" className="ml-[26px] mr-[8px]">
                    <path d="M1 7l4 5 9-11" fill="none" stroke="#3fae2a" strokeWidth="3" />
                    <circle cx="12" cy="10" r="3.500" fill="#e98a2a" />
                </svg>
            </div>
            <div className="flex-1 flex items-center pl-[8px] pb-[3px]">
                <div className="flex items-center">
                    {TOOLBAR.map((t, i) => (
                        <div key={i} className={`${t.width ?? "w-[42px]"} h-[28px] flex items-center justify-center border-r border-[#cfcfcf] last:border-r-0`}>{t.icon}</div>
                    ))}
                </div>
                <div className="ml-auto mr-[12px] w-[213px] h-[28px] bg-white border-2 border-[#c8c8c8] flex items-center text-[15px] text-[#111] pl-[7px] pr-[8px]">
                    <span className="w-[13px] h-[11px] flex flex-col gap-[1px] mr-[6px]">
                        <span className="flex gap-[1px] h-[6px]"><span className="flex-1 bg-[#9a9a9a]" /><span className="flex-1 bg-[#9a9a9a]" /></span>
                        <span className="h-[4px] bg-[#9a9a9a]" />
                    </span>
                    <span>I/O Planning</span>
                    <span className="ml-auto"><Chevron size={14} color="#666" /></span>
                </div>
            </div>
        </div>
    </>
);

export default function App() {
    return (
        <div className="w-[1920px] h-[1080px] overflow-hidden flex flex-col bg-[#eeeeee] font-['Liberation_Sans','Noto_Sans_CJK_SC',sans-serif]">
            <TopBars />
            <div className="flex shrink-0 h-[38px]">
                <div className="w-[296px] shrink-0 bg-[#6e6e6e] flex items-center pl-[10px] pr-[10px] text-white">
                    <span className="text-[15px] font-bold whitespace-nowrap">Flow Navigator</span>
                    <div className="ml-auto flex items-center gap-[9px]">
                        <span className="scale-[0.7] flex"><CollapseIcon color="#cfcfcf" /></span>
                        <span className="scale-[0.7] flex"><ExpandIcon color="#cfcfcf" /></span>
                        <span className="text-[15px] font-bold text-[#d8d8d8]">?</span>
                        <span className="w-[10px] h-[2px] bg-[#d8d8d8] mt-[8px]" />
                    </div>
                </div>
                <div className="flex-1 bg-[#c9dcfb] flex items-center pl-[14px] pr-[8px] text-[15px] text-[#111]">
                    <span className="font-bold">IMPLEMENTED DESIGN</span>
                    <span className="ml-[4px]">- xc7a100tfgg484-1</span>
                    <span className="ml-auto text-[#9a9a9a] font-bold text-[16px]">?</span>
                    <span className="ml-[9px]"><X size={16} color="#888" strokeWidth={1.500} /></span>
                </div>
            </div>
            <div className="flex h-[911px] shrink-0 bg-white">
                <Sidebar />
                <div className="flex-1 min-w-0 flex flex-col pt-[13px]">
                    <div className="h-[286px] shrink-0 flex">
                        <div className="w-[28px] ml-[10px] mr-[4px] shrink-0 flex flex-col">
                            <div className="h-[142px] border-t border-r border-b border-[#c4c4c4] rounded-r-[5px] flex items-center justify-center pr-[3px]">
                                <span className="[writing-mode:vertical-rl] rotate-180 text-[15px] text-[#777] whitespace-nowrap">I/O Port Properties</span>
                            </div>
                            <div className="h-[142px] border-r border-b border-[#c4c4c4] rounded-br-[5px] flex items-end justify-center pb-[4px] pr-[3px]">
                                <span className="[writing-mode:vertical-rl] rotate-180 text-[15px] text-[#777] whitespace-nowrap">Clock Regions</span>
                            </div>
                        </div>
                        <SourcesPanel />
                        <PackagePanel />
                    </div>
                    <IoPortsPanel />
                </div>
            </div>
            <div className="flex-1 flex items-center justify-end pr-[14px] pb-[10px]">
                <span className="text-[17px] text-[#a8a8a8]">CSDN @月亮炒饼</span>
            </div>
        </div>
    );
}
